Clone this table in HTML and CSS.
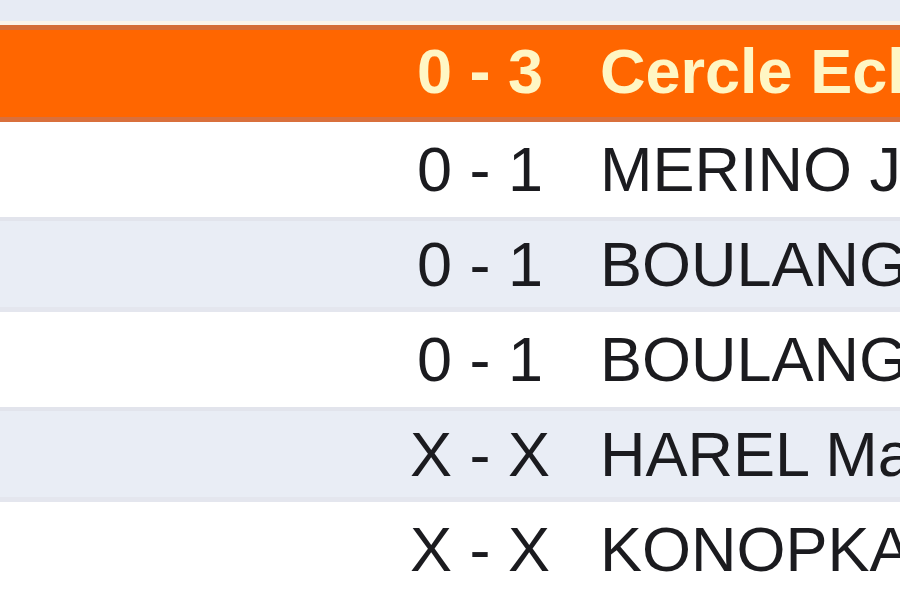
FILE: index.html
```html
<!DOCTYPE html>
<html lang="fr">
<head>
<meta charset="utf-8">
<title>Résultats</title>
<link rel="stylesheet" href="styles.css">
</head>
<body>
<div class="top-strip"></div>
<div class="results">
  <div class="row head">
    <div class="cell blank"></div>
    <div class="cell score">0 - 3</div>
    <div class="cell name">Cercle Echiquéen</div>
  </div>
  <div class="row">
    <div class="cell blank"></div>
    <div class="cell score">0 - 1</div>
    <div class="cell name">MERINO Jean</div>
  </div>
  <div class="row alt">
    <div class="cell blank"></div>
    <div class="cell score">0 - 1</div>
    <div class="cell name">BOULANGER Pierre</div>
  </div>
  <div class="row">
    <div class="cell blank"></div>
    <div class="cell score">0 - 1</div>
    <div class="cell name">BOULANGER Marc</div>
  </div>
  <div class="row alt">
    <div class="cell blank"></div>
    <div class="cell score">X - X</div>
    <div class="cell name">HAREL Mathieu</div>
  </div>
  <div class="row">
    <div class="cell blank"></div>
    <div class="cell score">X - X</div>
    <div class="cell name">KONOPKA Anna</div>
  </div>
</div>
</body>
</html>
```

FILE: styles.css
```css
html, body {
  margin: 0;
  padding: 0;
  background: #ffffff;
  overflow: hidden;
}

body {
  width: 900px;
  height: 600px;
  font-family: "Liberation Sans", Arial, sans-serif;
}

.top-strip {
  height: 21px;
  background: #e7ebf4;
  border-bottom: 4px solid #fbf3ea;
}

.results {
  display: flex;
  flex-direction: column;
}

.row {
  display: grid;
  grid-template-columns: 395px 170px 1fr;
  height: 95px;
  background: #ffffff;
  color: #1b1b1f;
  font-size: 63px;
  line-height: 95px;
}

.row.alt {
  background: #e9edf5;
  box-shadow: inset 0 4px 0 #e2e4ec, inset 0 -5px 0 #e4e6ee;
}

.row.head {
  height: 87px;
  line-height: 83px;
  padding-bottom: 4px;
  box-sizing: content-box;
  background: #ff6600;
  border-top: 5px solid #d46c38;
  border-bottom: 5px solid #d9703c;
  color: #fff6c4;
  font-weight: bold;
  height: 83px;
}

.cell {
  white-space: nowrap;
  overflow: hidden;
}

.score {
  text-align: center;
}

.name {
  padding-left: 35px;
}
```
